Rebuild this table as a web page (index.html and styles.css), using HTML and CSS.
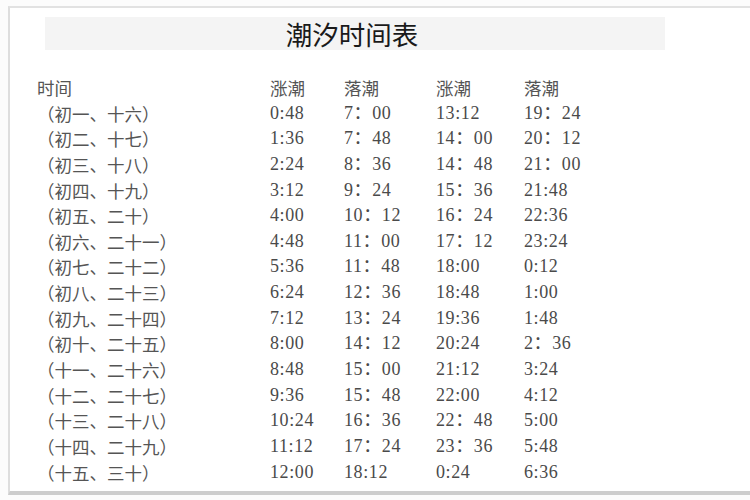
FILE: index.html
```html
<!DOCTYPE html>
<html lang="zh">
<head>
<meta charset="utf-8">
<title>潮汐时间表</title>
<link rel="stylesheet" href="styles.css">
</head>
<body>
<div class="page">
  <div class="banner"><h1 class="title">潮汐时间表</h1></div>
  <div class="tide">
    <div class="lbl">时间</div><div class="hd">涨潮</div><div class="hd">落潮</div><div class="hd">涨潮</div><div class="hd">落潮</div>
    <div class="lbl">（初一、十六）</div><div>0:48</div><div>7：00</div><div>13:12</div><div>19：24</div>
    <div class="lbl">（初二、十七）</div><div>1:36</div><div>7：48</div><div>14：00</div><div>20：12</div>
    <div class="lbl">（初三、十八）</div><div>2:24</div><div>8：36</div><div>14：48</div><div>21：00</div>
    <div class="lbl">（初四、十九）</div><div>3:12</div><div>9：24</div><div>15：36</div><div>21:48</div>
    <div class="lbl">（初五、二十）</div><div>4:00</div><div>10：12</div><div>16：24</div><div>22:36</div>
    <div class="lbl">（初六、二十一）</div><div>4:48</div><div>11：00</div><div>17：12</div><div>23:24</div>
    <div class="lbl">（初七、二十二）</div><div>5:36</div><div>11：48</div><div>18:00</div><div>0:12</div>
    <div class="lbl">（初八、二十三）</div><div>6:24</div><div>12：36</div><div>18:48</div><div>1:00</div>
    <div class="lbl">（初九、二十四）</div><div>7:12</div><div>13：24</div><div>19:36</div><div>1:48</div>
    <div class="lbl">（初十、二十五）</div><div>8:00</div><div>14：12</div><div>20:24</div><div>2：36</div>
    <div class="lbl">（十一、二十六）</div><div>8:48</div><div>15：00</div><div>21:12</div><div>3:24</div>
    <div class="lbl">（十二、二十七）</div><div>9:36</div><div>15：48</div><div>22:00</div><div>4:12</div>
    <div class="lbl">（十三、二十八）</div><div>10:24</div><div>16：36</div><div>22：48</div><div>5:00</div>
    <div class="lbl">（十四、二十九）</div><div>11:12</div><div>17：24</div><div>23：36</div><div>5:48</div>
    <div class="lbl">（十五、三十）</div><div>12:00</div><div>18:12</div><div>0:24</div><div>6:36</div>
  </div>
</div>
</body>
</html>
```
FILE: styles.css
```css
html, body {
  margin: 0;
  padding: 0;
  background: #fcfcfc;
}
.page {
  margin: 6px 0 0 8px;
  height: 489px;
  box-sizing: border-box;
  background: #ffffff;
  border-top: 2px solid #e2e2e2;
  border-left: 2px solid #dedede;
  border-bottom: 4px solid #cdcdcd;
  box-shadow: 0 2px 0 #e6e6e6;
}
.banner {
  margin: 9px 0 0 35px;
  width: 620px;
  height: 33px;
  background: #f4f4f4;
  display: flex;
  justify-content: center;
  align-items: center;
}
.title {
  margin: 0;
  font-family: "Noto Sans CJK SC", sans-serif;
  font-weight: 400;
  font-size: 26.5px;
  line-height: 33px;
  color: #1a1a1a;
  position: relative;
  left: -3px;
}
.tide {
  margin: 25px 0 0 27px;
  display: grid;
  grid-template-columns: 233px 74px 92px 88px auto;
  grid-auto-rows: 25.65px;
  font-family: "Liberation Serif", "Noto Sans CJK SC", serif;
  font-size: 18px;
  line-height: 25.65px;
  letter-spacing: 0.6px;
  color: #4a4a4a;
  white-space: nowrap;
}
.lbl, .hd {
  font-family: "Noto Sans CJK SC", sans-serif;
  font-size: 17.5px;
  letter-spacing: 0;
  color: #555;
}
```
